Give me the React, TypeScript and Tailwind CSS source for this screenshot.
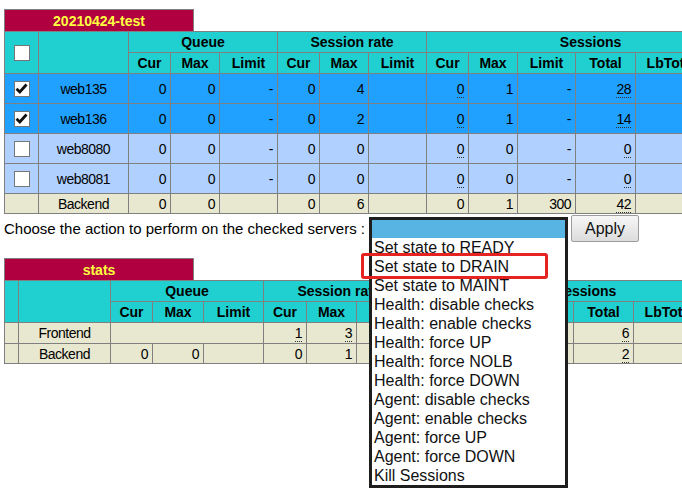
import React from "react";

const cyan = "bg-[#20d0d0]";
const blue = "bg-[#20a0ff]";
const light = "bg-[#b0d0ff]";
const beige = "bg-[#e8e8d0]";

type Val = string | { v: string; dot: true };

const d = (v: string): Val => ({ v, dot: true });

function Num({ v }: { v: Val }) {
  if (typeof v === "string") return <>{v}</>;
  return <span className="border-b border-dotted border-[#333]">{v.v}</span>;
}

function Check({ on }: { on: boolean }) {
  return (
    <div className="mx-auto flex h-[16px] w-[16px] items-center justify-center border border-[#767676] bg-white">
      {on && (
        <svg width="13" height="13" viewBox="0 0 13 13">
          <path d="M1.5 6.8 L4.8 10 L11.5 2.5" fill="none" stroke="#111" strokeWidth="2.8" />
        </svg>
      )}
    </div>
  );
}

function Title({ text }: { text: string }) {
  return (
    <div className="flex h-[22px] w-[190px] items-center justify-center border border-b-0 border-[#808080] bg-[#b00040] text-[14px] font-bold leading-[16px] text-[#ffff40]">
      {text}
    </div>
  );
}

const td = "border border-[#808080] p-0 pr-[4px] text-right";
const th = "border border-[#808080] p-0 text-center font-bold text-[14px]";
const cellFont = "text-[14px] leading-[16px] tracking-[-0.5px]";

function Header({ first }: { first: React.ReactNode }) {
  return (
    <thead className="tracking-normal">
      <tr className={`h-[21px] ${cyan}`}>
        <th rowSpan={2} className={th}>{first}</th>
        <th rowSpan={2} className={th}></th>
        <th colSpan={3} className={th}>Queue</th>
        <th colSpan={3} className={th}>Session rate</th>
        <th colSpan={6} className={th}>Sessions</th>
      </tr>
      <tr className={`h-[21px] ${cyan}`}>
        {["Cur", "Max", "Limit", "Cur", "Max", "Limit", "Cur", "Max", "Limit", "Total", "LbTot", "Last"].map((h, i) => (
          <th key={i} className={th}>{h}</th>
        ))}
      </tr>
    </thead>
  );
}

const servers: { name: string; on: boolean; bg: string; vals: Val[] }[] = [
  { name: "web135", on: true, bg: blue, vals: ["0", "0", "-", "0", "4", "", d("0"), "1", "-", d("28"), "", ""] },
  { name: "web136", on: true, bg: blue, vals: ["0", "0", "-", "0", "2", "", d("0"), "1", "-", d("14"), "", ""] },
  { name: "web8080", on: false, bg: light, vals: ["0", "0", "-", "0", "0", "", d("0"), "0", "-", d("0"), "", ""] },
  { name: "web8081", on: false, bg: light, vals: ["0", "0", "-", "0", "0", "", d("0"), "0", "-", d("0"), "", ""] },
];

const options = [
  "Set state to READY",
  "Set state to DRAIN",
  "Set state to MAINT",
  "Health: disable checks",
  "Health: enable checks",
  "Health: force UP",
  "Health: force NOLB",
  "Health: force DOWN",
  "Agent: disable checks",
  "Agent: enable checks",
  "Agent: force UP",
  "Agent: force DOWN",
  "Kill Sessions",
];

export default function App() {
  const cols1 = [34, 90, 42, 49, 58, 42, 49, 58, 42, 49, 58, 60, 60, 59];
  const cols2 = [14, 92, 42, 51, 60, 43, 50, 58, 42, 49, 68, 60, 60, 63];

  return (
    <div className="relative h-[499px] w-[682px] overflow-hidden bg-white pl-[4px] pt-[9px] font-['Liberation_Sans',Arial,sans-serif] text-black">
      <Title text="20210424-test" />
      <table className={`table-fixed border-collapse border border-[#808080] ${cellFont}`} style={{ width: 750 }}>
        <colgroup>
          {cols1.map((w, i) => (
            <col key={i} style={{ width: w }} />
          ))}
        </colgroup>
        <Header first={<Check on={false} />} />
        <tbody>
          {servers.map((s) => (
            <tr key={s.name} className={`h-[30px] ${s.bg}`}>
              <td className="border border-[#808080] p-0">
                <Check on={s.on} />
              </td>
              <td className="border border-[#808080] p-0 text-center">{s.name}</td>
              {s.vals.map((v, i) => (
                <td key={i} className={td}>
                  <Num v={v} />
                </td>
              ))}
            </tr>
          ))}
          <tr className={`h-[20px] ${beige}`}>
            <td className="border border-[#808080] p-0"></td>
            <td className="border border-[#808080] p-0 text-center">Backend</td>
            {(["0", "0", "", "0", "6", "", "0", "1", "300", d("42"), "", ""] as Val[]).map((v, i) => (
              <td key={i} className={td}>
                <Num v={v} />
              </td>
            ))}
          </tr>
        </tbody>
      </table>

      <div className="mt-[1px] flex h-[27px] items-center">
        <span className="w-[365px] text-[15px] leading-[18px]">Choose the action to perform on the checked servers :</span>
        <div className="w-[202px]"></div>
        <button className="h-[27px] w-[68px] rounded-[2px] border border-[#9c9c9c] bg-gradient-to-b from-[#f7f7f7] to-[#dcdcdc] text-[16px] leading-[18px] text-[#111]">
          Apply
        </button>
      </div>

      <div className="mt-[16px]">
        <Title text="stats" />
        <table className={`table-fixed border-collapse border border-[#808080] ${cellFont}`} style={{ width: 752 }}>
          <colgroup>
            {cols2.map((w, i) => (
              <col key={i} style={{ width: w }} />
            ))}
          </colgroup>
          <Header first={null} />
          <tbody>
            <tr className={`h-[21px] ${beige}`}>
              <td className="border border-[#808080] p-0"></td>
              <td className="border border-[#808080] p-0 text-center">Frontend</td>
              <td colSpan={3} className="border border-[#808080] p-0"></td>
              {([d("1"), d("3"), "", "", "", "", d("6"), "", ""] as Val[]).map((v, i) => (
                <td key={i} className={td}>
                  <Num v={v} />
                </td>
              ))}
            </tr>
            <tr className={`h-[20px] ${beige}`}>
              <td className="border border-[#808080] p-0"></td>
              <td className="border border-[#808080] p-0 text-center">Backend</td>
              {(["0", "0", "", "0", "1", "", "", "", "", d("2"), "", ""] as Val[]).map((v, i) => (
                <td key={i} className={td}>
                  <Num v={v} />
                </td>
              ))}
            </tr>
          </tbody>
        </table>
      </div>

      {/* open select list */}
      <div className="absolute left-[369px] top-[217px] w-[199px] border-[3px] border-[#1e1e1e] bg-white text-[16px] leading-[19px] text-[#111]">
        <div className="h-[18px] bg-[#58b4e2]"></div>
        {options.map((o) => (
          <div key={o} className="h-[19px] whitespace-nowrap pl-[2px]">
            {o}
          </div>
        ))}
      </div>
      <div className="absolute left-[361px] top-[253px] h-[26px] w-[187px] rounded-[3px] border-[3px] border-[#e52320]"></div>
    </div>
  );
}
